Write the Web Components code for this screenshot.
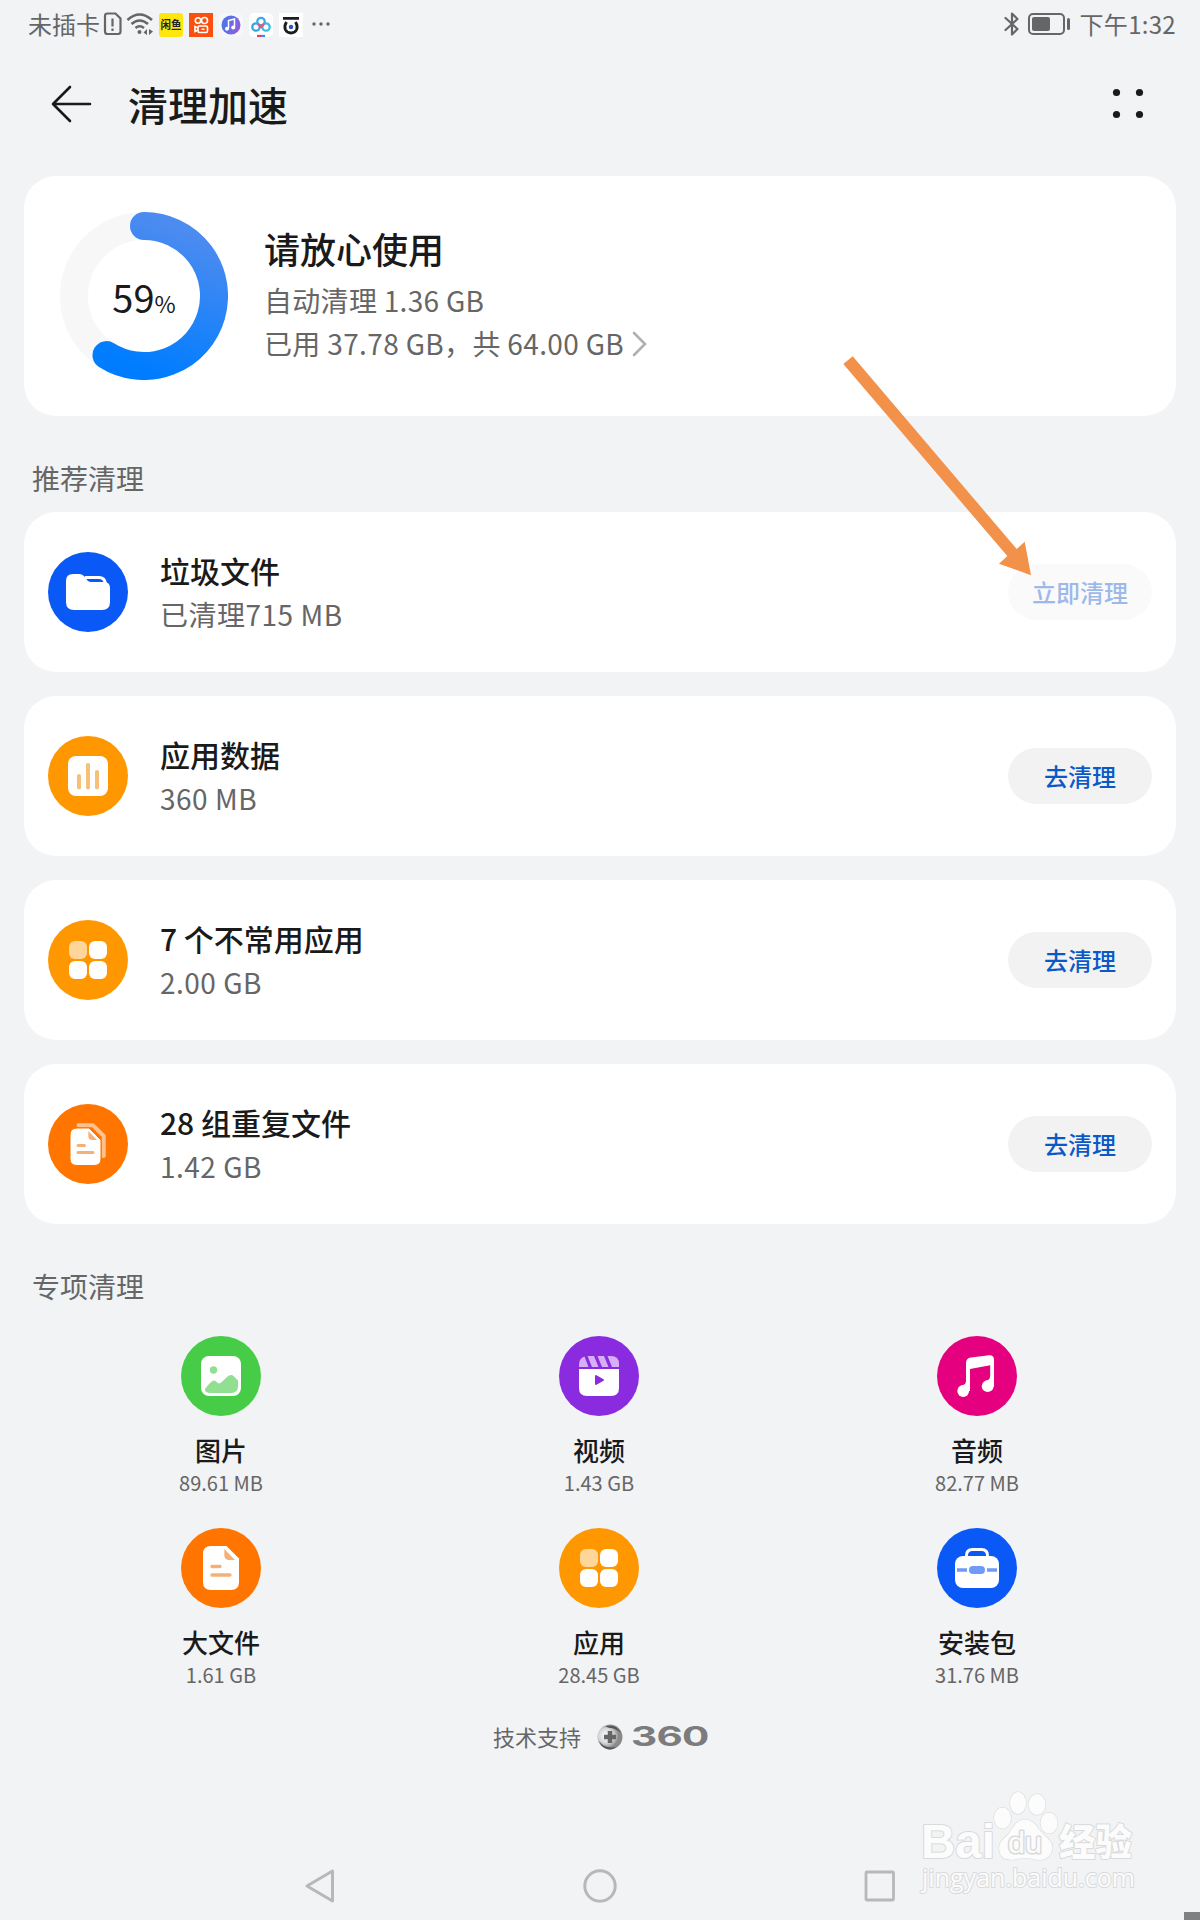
<!DOCTYPE html>
<html lang="zh-CN">
<head>
<meta charset="utf-8">
<title>清理加速</title>
<style>
  body {
    margin: 0;
    background: #f1f3f5;
    color: #1a1a1a;
    font-family: "Noto Sans CJK SC", sans-serif;
  }
</style>
</head>
<body>
<cleaner-app></cleaner-app>

<script>
const ICONS = {
  folder: `
    <path d="M37 25.500h14q5.500 0 6.500 6" fill="none" stroke="#fff" stroke-width="3"/>
    <path fill="#fff" d="M18 29q0-7 7-7h6q3 0 5 2l3.500 4.500q1.500 1.500 4 1.500h12.500q6 0 6 6v14q0 8-8 8h-28q-8 0-8-8z"/>`,
  chart: `
    <rect x="20" y="20" width="40" height="40" rx="8" fill="#fff"/>
    <path d="M31 40v11.500M40 29v22.500M49 36v15.500" stroke="#f5c078" stroke-width="4" stroke-linecap="round"/>`,
  apps: `
    <g fill="#fff">
      <rect x="21" y="21" width="18" height="18" rx="6" fill="#ffd699"/>
      <rect x="41" y="21" width="18" height="18" rx="6"/>
      <rect x="21" y="41" width="18" height="18" rx="6"/>
      <rect x="41" y="41" width="18" height="18" rx="6"/>
    </g>`,
  copies: `
    <path d="M30.500 21.300h14.500l10.700 10.700v20" fill="none" stroke="#ffc08c" stroke-width="4" stroke-linecap="round" stroke-linejoin="round"/>
    <path fill="#fff" stroke="#ff7500" stroke-width="1" d="M22 31q0-7 7-7h12l12 12v18.500q0 7-7 7h-17q-7 0-7-7z"/>
    <path fill="#f5b078" d="M40.300 27v5q0 4 4 4h4.700z"/>
    <path d="M30 41.500h6.500M30 48.500h15" stroke="#f5b078" stroke-width="3" stroke-linecap="round"/>`,
  image: `
    <rect x="20" y="20" width="40" height="40" rx="8" fill="#fff"/>
    <circle cx="32.500" cy="34" r="3.700" fill="#91e091"/>
    <path fill="#91e091" d="M24 53q5-7 8-8.300 2-.7 4.500 2 2 2 4.500-1l5-4.700q4-3.500 7-.5l4 4v6q0 6.500-6.500 6.500h-21q-6 0-5.500-4z"/>`,
  video: `
    <path fill="#fff" d="M20 33h40v19q0 8-8 8h-24q-8 0-8-8z"/>
    <path fill="#d7aef8" d="M20 31v-3q0-5.500 5.500-7.500l4 10.500zM28.500 20h6.500l4.500 11h-6.500zM38.500 20h6.500l4.500 11h-6.500zM48.500 20h3.500q8 0 8 8v3h-7z"/>
    <path fill="#8a2be0" stroke="#8a2be0" stroke-width="2" stroke-linejoin="round" d="M37 40v8l7-4z"/>`,
  music: `
    <g fill="#fff">
      <circle cx="26.200" cy="55" r="5.900"/>
      <circle cx="50.700" cy="50.200" r="5.900"/>
      <path d="M29 27q0-5 5-5.500l18-2.300q5-.5 5 4.500v27h-3.800v-21.400l-20.200 3.700v22h-4z"/>
      <path d="M24 49.500q5-.5 5-5h4v10zM48.500 44.700q4.700-.5 4.700-4.700h3.800v10z"/>
    </g>`,
  document: `
    <path fill="#fff" d="M22 26q0-8 8-8h15.500l12.500 12.500v23.500q0 8-8 8h-20q-8 0-8-8z"/>
    <path fill="#f5b078" d="M43.300 21v6q0 5 5 5h5.700z"/>
    <path d="M31 38.500h8M31 47h18" stroke="#f5b078" stroke-width="3.300" stroke-linecap="round"/>`,
  toolbox: `
    <path d="M29.500 30v-2.500q0-6 6-6h9q6 0 6 6v2.500" fill="none" stroke="#fff" stroke-width="3"/>
    <rect x="18" y="28" width="44" height="32" rx="8" fill="#fff"/>
    <path d="M20 42h10M50 42h10" stroke="#6f9af8" stroke-width="3.500"/>
    <rect x="32" y="38" width="16" height="8" rx="4" fill="#6f9af8"/>`
};

const define = (name, html) => {
  const template = document.createElement('template');
  template.innerHTML = html;

  window.customElements.define(name, class extends HTMLElement {
    constructor() {
      super();
      this.attachShadow({ mode: 'open' }).appendChild(template.content.cloneNode(true));
    }
  });
};

class RoundIcon extends HTMLElement {
  constructor() {
    super();
    this._shadowRoot = this.attachShadow({ mode: 'open' });
  }

  connectedCallback() {
    this._shadowRoot.innerHTML = `
      <style>
        :host { display: block; flex: none; width: 80px; height: 80px; }
        svg { display: block; }
      </style>
      <svg width="80" height="80" viewBox="0 0 80 80">
        <circle cx="40" cy="40" r="40" fill="${this.getAttribute('color')}"/>
        ${ICONS[this.getAttribute('name')]}
      </svg>`;
  }
}

window.customElements.define('round-icon', RoundIcon);

define('status-bar', `
<style>
  :host {
    display: flex;
    align-items: center;
    justify-content: space-between;
    box-sizing: border-box;
    height: 48px;
    padding: 0 24px 0 28px;
    color: #666;
    font-size: 24px;
    line-height: 48px;
  }
  .side { display: flex; align-items: center; height: 48px; }
  .apps { display: flex; gap: 6px; margin: 2px 9px 0 5px; }
  .bluetooth { margin-right: 8px; }
  .battery { margin-right: 9px; }
  svg { display: block; }
  .time { letter-spacing: .3px; }
</style>
<div class="side">
  <span>未插卡</span>
  <svg width="19" height="24" viewBox="0 0 19 24" style="margin-left:3px" fill="none" stroke="#666" stroke-width="2.200">
    <path d="M4.500 1.500h8l5 5v13q0 2.500-2.500 2.500h-10.500q-2.500 0-2.500-2.500v-15.500q0-2.500 2.500-2.500z"/>
    <path d="M9.500 6.500v8M9.500 16.500v2.500"/>
  </svg>
  <svg width="28" height="24" viewBox="0 0 28 24" style="margin-left:4px" fill="none" stroke="#666" stroke-width="2.600">
    <path d="M1.500 8q12-11 24.500 0M5.500 12q8-7 16.500 0M9.500 16q4-3.500 8.500 0"/>
    <circle cx="13.500" cy="20" r="2" fill="#666" stroke="none"/>
    <path fill="#666" stroke="none" d="M21 17v6l-3.500-2.500zM23 17v6l4-3.500z"/>
  </svg>
  <div class="apps">
    <svg width="24" height="24" viewBox="0 0 24 24">
      <rect width="24" height="24" rx="3" fill="#ffe60f"/>
      <text x="1.500" y="16.300" font-size="11" font-weight="700" textLength="21" lengthAdjust="spacingAndGlyphs" fill="#222">闲鱼</text>
    </svg>
    <svg width="24" height="24" viewBox="0 0 24 24" fill="none" stroke="#fff" stroke-width="1.600">
      <rect width="24" height="24" fill="#f9500f" stroke="none"/>
      <circle cx="9" cy="7.500" r="2.700"/><circle cx="15.500" cy="7.500" r="3"/>
      <rect x="9" y="13" width="9.500" height="6.500" rx="1.500"/><path d="M9 15l-3-1.500v5l3-1.500M12.500 16.200h3"/>
    </svg>
    <svg width="24" height="24" viewBox="0 0 24 24">
      <defs><linearGradient id="m" x1="0" x2="1" y2=".4"><stop stop-color="#3f7be8"/><stop offset="1" stop-color="#8a5fe0"/></linearGradient></defs>
      <rect width="24" height="24" rx="5" fill="#f7f6fb"/>
      <circle cx="12" cy="12" r="9.500" fill="url(#m)"/>
      <path d="M9.500 15.500v-8l6-1.500v8.500" fill="none" stroke="#fff" stroke-width="1.500"/>
      <circle cx="8" cy="15.800" r="2" fill="#fff"/><circle cx="14.200" cy="14.600" r="2" fill="#fff"/>
    </svg>
    <svg width="24" height="24" viewBox="0 0 24 24" fill="none" stroke-width="2.300">
      <rect width="24" height="24" rx="5" fill="#fff"/>
      <circle cx="7" cy="14" r="3.700" stroke="#36a5e8"/><circle cx="17" cy="14" r="3.700" stroke="#35bfe0"/>
      <circle cx="12" cy="8.500" r="3.700" stroke="#3fa9e8"/><path d="M9 11l3 3 3-3" stroke="#ee5470"/>
      <path d="M8 23h4" stroke="#e84060"/><path d="M12 23h4" stroke="#3a8de8"/>
    </svg>
    <svg width="24" height="24" viewBox="0 0 24 24" fill="none" stroke="#1d1d20" stroke-width="2.800">
      <rect width="24" height="24" fill="#fff" stroke="none"/>
      <path d="M4 5.300h16M7.500 9q-2.500 4-1.200 7.500 1.700 3.500 5.700 3.500t5.700-3.500q1.300-3.500-1.200-7.500"/>
      <circle cx="12" cy="14" r="2.200" fill="#2b55c0" stroke="none"/>
    </svg>
  </div>
  <svg width="18" height="6" viewBox="0 0 18 6" fill="#666"><circle cx="2" cy="3" r="1.700"/><circle cx="9" cy="3" r="1.700"/><circle cx="16" cy="3" r="1.700"/></svg>
</div>
<div class="side">
  <svg class="bluetooth" width="16" height="24" viewBox="0 0 16 24" fill="none" stroke="#666" stroke-width="2.200" stroke-linejoin="round" stroke-linecap="round">
    <path d="M1.500 6l12 11-5.500 5.500v-21l5.500 5.500-12 11"/>
  </svg>
  <svg class="battery" width="43" height="24" viewBox="0 0 43 24">
    <rect x="1" y="2" width="35" height="20" rx="4" fill="none" stroke="#666" stroke-width="2"/>
    <rect x="4" y="5" width="18" height="14" rx="2" fill="#666"/>
    <rect x="39" y="6" width="3" height="12" rx="1.500" fill="#666"/>
  </svg>
  <span class="time">下午1:32</span>
</div>
`);

define('page-header', `
<style>
  :host {
    display: flex;
    align-items: center;
    box-sizing: border-box;
    height: 112px;
    padding: 0 56px 0 51px;
  }
  h1 { flex: 1; margin: 0 0 0 36px; font-size: 40px; font-weight: 500; line-height: 60px; }
  svg { display: block; }
</style>
<svg width="41" height="40" viewBox="0 0 41 40" fill="none" stroke="#1a1a1a" stroke-width="2.600" stroke-linecap="round" stroke-linejoin="round">
  <path d="M39 20h-36.500M19 3l-17 17 17 17"/>
</svg>
<h1><slot></slot></h1>
<svg width="32" height="32" viewBox="0 0 32 32" fill="#1a1a1a">
  <circle cx="4.500" cy="4.500" r="3.600"/><circle cx="27.500" cy="4.500" r="3.600"/>
  <circle cx="4.500" cy="26.500" r="3.600"/><circle cx="27.500" cy="26.500" r="3.600"/>
</svg>
`);

define('usage-ring', `
<style>
  :host { display: grid; width: 168px; height: 168px; place-items: center; }
  svg, .value { grid-area: 1 / 1; }
  .value { font-size: 38px; line-height: 44px; padding-top: 7px; }
  small { font-size: 23px; }
</style>
<svg width="168" height="168" viewBox="0 0 168 168" fill="none" stroke-width="28">
  <defs>
    <linearGradient id="ring" x1=".6" y1="0" x2=".3" y2="1">
      <stop stop-color="#4c8bf0"/><stop offset="1" stop-color="#007dff"/>
    </linearGradient>
  </defs>
  <circle cx="84" cy="84" r="70" stroke="#f7f7f7"/>
  <path d="M84 14a70 70 0 1 1-37.500 129.100" stroke="url(#ring)" stroke-linecap="round"/>
</svg>
<div class="value"><slot></slot><small>%</small></div>
`);

define('storage-card', `
<style>
  :host {
    display: flex;
    align-items: center;
    box-sizing: border-box;
    height: 240px;
    margin: 16px 24px 0;
    padding-left: 36px;
    background: #fff;
    border-radius: 32px;
  }
  .info { margin-left: 36px; padding-bottom: 7px; }
  h2 { margin: 0 0 3px; font-size: 36px; font-weight: 500; line-height: 56px; }
  p { display: flex; align-items: center; margin: 0; color: #666; font-size: 28px; line-height: 43px; white-space: pre; }
  .auto { letter-spacing: .3px; }
  .used { letter-spacing: .35px; }
  svg { margin-left: 8px; }
</style>
<usage-ring>59</usage-ring>
<div class="info">
  <h2>请放心使用</h2>
  <p class="auto">自动清理 1.36 GB</p>
  <p class="used">已用 37.78 GB，共 64.00 GB<svg width="16" height="28" viewBox="0 0 16 28" fill="none" stroke="#b0b0b0" stroke-width="2.600" stroke-linecap="round"><path d="M2 3l11 11-11 11"/></svg></p>
</div>
`);

define('section-title', `
<style>
  :host {
    display: block;
    box-sizing: border-box;
    height: 96px;
    padding: 40px 32px 0;
    color: #666;
    font-size: 28px;
    line-height: 44px;
  }
</style>
<slot></slot>
`);

define('clean-item', `
<style>
  :host {
    display: flex;
    align-items: center;
    box-sizing: border-box;
    height: 160px;
    margin: 0 24px;
    padding: 0 24px;
    background: #fff;
    border-radius: 32px;
  }
  .text { flex: 1; margin-left: 32px; }
  .title { font-size: 30px; font-weight: 500; line-height: 44px; }
  .size { color: #666; font-size: 28px; line-height: 44px; letter-spacing: .5px; }
  button {
    width: 144px;
    height: 56px;
    padding: 0;
    border: 0;
    border-radius: 28px;
    background: #f2f2f2;
    color: #0a59c8;
    font: 500 24px/56px "Noto Sans CJK SC", sans-serif;
  }
  :host([done]) button { background: #fafafa; color: #9db9ea; }
</style>
<slot name="icon"></slot>
<div class="text">
  <div class="title"><slot name="title"></slot></div>
  <div class="size"><slot name="size"></slot></div>
</div>
<button><slot name="action">去清理</slot></button>
`);

define('category-item', `
<style>
  :host { display: flex; flex-direction: column; align-items: center; height: 192px; }
  .name { margin-top: 15px; font-size: 26px; font-weight: 500; line-height: 37px; }
  .size { color: #666; font-size: 20px; line-height: 30px; }
</style>
<slot name="icon"></slot>
<div class="name"><slot name="name"></slot></div>
<div class="size"><slot name="size"></slot></div>
`);

define('support-line', `
<style>
  :host { display: flex; align-items: center; justify-content: center; height: 34px; color: #666; font-size: 22px; line-height: 34px; }
  span { padding-bottom: 3px; }
  svg { margin: 0 8px 0 16px; }
  .brand { width: 76px; height: 34px; }
  b {
    display: block;
    transform: scaleX(1.500);
    transform-origin: 0 50%;
    color: #7c7c7c;
    font: 700 27px/34px Inter, sans-serif;
    letter-spacing: -.5px;
  }
</style>
<span>技术支持</span>
<svg width="26" height="26" viewBox="0 0 26 26">
  <defs><radialGradient id="ball" cx=".35" cy=".45"><stop stop-color="#fff"/><stop offset=".6" stop-color="#d6d6d6"/><stop offset="1" stop-color="#8a8a8a"/></radialGradient></defs>
  <circle cx="13" cy="13" r="12.500" fill="url(#ball)"/>
  <path d="M8 2.500q10-3.500 16 6.500-6-5-11-5M2 17q4 6 12 6.500 4 0 6-1-4 3.500-9 2.800-7-1.800-9-8.300" fill="#555"/>
  <path d="M13 7v12M7 13h12" stroke="#666" stroke-width="4.500"/>
</svg>
<div class="brand"><b>360</b></div>
`);

define('nav-bar', `
<style>
  :host { display: flex; align-items: center; justify-content: space-between; height: 68px; margin: auto 304px 0; }
</style>
<svg width="32" height="36" viewBox="0 0 32 36" fill="none" stroke="#b7b8ba" stroke-width="3" stroke-linejoin="round"><path d="M3 18l25.500-15v30z"/></svg>
<svg width="36" height="36" viewBox="0 0 36 36" fill="none" stroke="#b7b8ba" stroke-width="3"><circle cx="18" cy="18" r="15.200"/></svg>
<svg width="32" height="36" viewBox="0 0 32 36" fill="none" stroke="#b7b8ba" stroke-width="2.800"><rect x="2" y="4" width="27.500" height="28" rx="1"/></svg>
`);

// annotation arrow, lies over the cards
define('pointer-arrow', `
<style>
  :host { position: absolute; left: 840px; top: 352px; width: 200px; height: 230px; }
</style>
<svg width="200" height="230" viewBox="840 352 200 230">
  <path fill="#f2914a" d="M843.300 364l9.400-7.700 164 192.700 8-7.300 6.300 33.600-32-11.600 8.300-7.700z"/>
</svg>
`);

define('water-mark', `
<style>
  :host { position: absolute; left: 912px; top: 1782px; width: 288px; height: 138px; }
  svg { display: block; }
</style>
<svg width="288" height="138" viewBox="912 1782 288 138" fill="#fcfcfc" stroke="#d9dadb" stroke-width="2" paint-order="stroke" stroke-linejoin="round">
  <text x="921" y="1858" font-family="Liberation Sans" font-weight="700" font-size="48" textLength="74" lengthAdjust="spacingAndGlyphs">Bai</text>
  <ellipse cx="1002.500" cy="1818" rx="8.500" ry="10.500" stroke-width="1.200"/>
  <ellipse cx="1018" cy="1803" rx="8" ry="11" stroke-width="1.200"/>
  <ellipse cx="1037" cy="1804.500" rx="8.500" ry="10.500" stroke-width="1.200"/>
  <ellipse cx="1049" cy="1823" rx="8.500" ry="10.500" stroke-width="1.200"/>
  <path stroke-width="1.200" d="M1025 1819.500q8 0 14 10 4 5 9 9 7 7 3 15-5 8-15 6-11-2.500-22 0-11 1.500-14-6-3-9 4-15 5-4 9-11 5-8 12-8z"/>
  <text x="1008" y="1853" font-family="Liberation Sans" font-size="30" textLength="34" lengthAdjust="spacingAndGlyphs" stroke-width="3">du</text>
  <text x="1059" y="1856" font-family="Noto Sans CJK SC" font-weight="900" font-size="37" textLength="73" lengthAdjust="spacingAndGlyphs">经验</text>
  <text x="922" y="1887" font-family="Open Sans" font-size="25" textLength="213" lengthAdjust="spacingAndGlyphs">jingyan.baidu.com</text>
  <rect x="1184" y="1912" width="16" height="8" fill="#808080" stroke="none"/>
</svg>
`);

define('cleaner-app', `
<style>
  :host { position: relative; display: flex; flex-direction: column; width: 1200px; height: 1920px; overflow: hidden; }
  .list { display: flex; flex-direction: column; gap: 24px; }
  .grid { display: grid; grid-template-columns: repeat(3, 378px); margin: 16px 0 0 32px; }
</style>
<status-bar></status-bar>
<page-header>清理加速</page-header>
<storage-card></storage-card>
<section-title>推荐清理</section-title>
<div class="list">
  <clean-item done>
    <round-icon slot="icon" name="folder" color="#0a59f7"></round-icon>
    <span slot="title">垃圾文件</span><span slot="size">已清理715 MB</span><span slot="action">立即清理</span>
  </clean-item>
  <clean-item>
    <round-icon slot="icon" name="chart" color="#ff9800"></round-icon>
    <span slot="title">应用数据</span><span slot="size">360 MB</span>
  </clean-item>
  <clean-item>
    <round-icon slot="icon" name="apps" color="#ff9800"></round-icon>
    <span slot="title">7 个不常用应用</span><span slot="size">2.00 GB</span>
  </clean-item>
  <clean-item>
    <round-icon slot="icon" name="copies" color="#ff7500"></round-icon>
    <span slot="title">28 组重复文件</span><span slot="size">1.42 GB</span>
  </clean-item>
</div>
<section-title>专项清理</section-title>
<div class="grid">
  <category-item>
    <round-icon slot="icon" name="image" color="#47cc47"></round-icon>
    <span slot="name">图片</span><span slot="size">89.61 MB</span>
  </category-item>
  <category-item>
    <round-icon slot="icon" name="video" color="#8a2be0"></round-icon>
    <span slot="name">视频</span><span slot="size">1.43 GB</span>
  </category-item>
  <category-item>
    <round-icon slot="icon" name="music" color="#e4007f"></round-icon>
    <span slot="name">音频</span><span slot="size">82.77 MB</span>
  </category-item>
  <category-item>
    <round-icon slot="icon" name="document" color="#ff7500"></round-icon>
    <span slot="name">大文件</span><span slot="size">1.61 GB</span>
  </category-item>
  <category-item>
    <round-icon slot="icon" name="apps" color="#ff9800"></round-icon>
    <span slot="name">应用</span><span slot="size">28.45 GB</span>
  </category-item>
  <category-item>
    <round-icon slot="icon" name="toolbox" color="#0a59f7"></round-icon>
    <span slot="name">安装包</span><span slot="size">31.76 MB</span>
  </category-item>
</div>
<support-line></support-line>
<nav-bar></nav-bar>
<pointer-arrow></pointer-arrow>
<water-mark></water-mark>
`);
</script>
</body>
</html>
